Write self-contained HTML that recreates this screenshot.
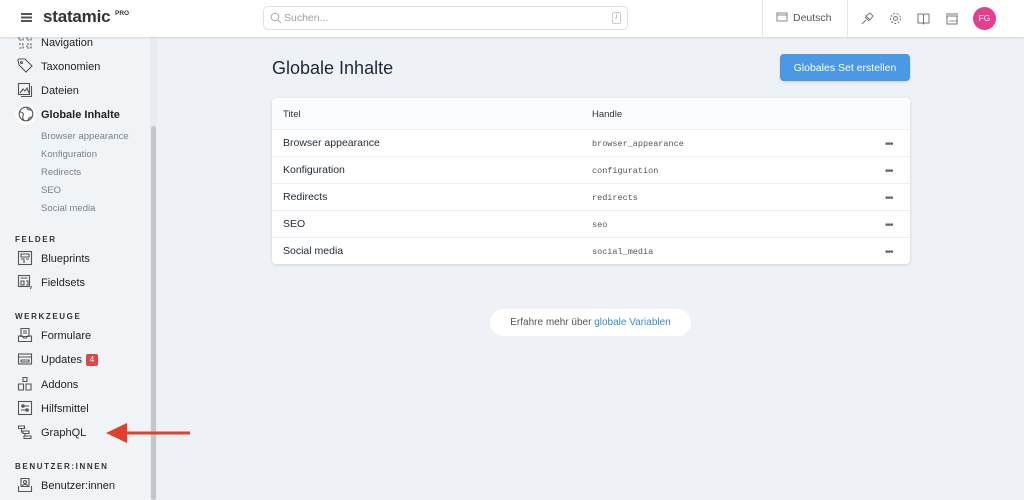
<!DOCTYPE html>
<html><head><meta charset="utf-8"><style>
*{box-sizing:border-box;margin:0;padding:0}
body{width:1024px;height:500px;overflow:hidden;background:#eef1f5;font-family:"Liberation Sans",sans-serif;color:#1f2937;position:relative}
.hdr{position:absolute;left:0;top:0;width:1024px;height:37px;background:#fff;box-shadow:0 1px 2px rgba(0,0,0,.12);z-index:5}
.side{position:absolute;left:0;top:37px;width:150px;height:463px;background:#f1f4f7}
.sb{position:absolute;left:150px;top:37px;width:7px;height:463px;background:#e8ecf0}
.sbt{position:absolute;left:151px;top:126px;width:5px;height:374px;background:#c4c7ca;border-radius:3px}
.it{position:absolute;left:41px;font-size:11px;color:#222;margin-top:1px}
.sub{position:absolute;left:41px;font-size:9.5px;color:#7a818a;margin-top:1px}
.sec{position:absolute;left:15px;font-size:8px;font-weight:bold;letter-spacing:1.6px;color:#333}
.ic{position:absolute;left:17px;width:16px;height:16px}
.ic svg{width:16px;height:16px;fill:none;stroke:#555;stroke-width:1.1}
.card{position:absolute;left:272px;top:98px;width:638px;height:166px;background:#fff;border-radius:4px;box-shadow:0 1px 3px rgba(0,0,0,.12)}
.row{position:absolute;left:0;width:638px;height:27px;border-top:1px solid #eceff2;font-size:10.5px}
.row .t{position:absolute;left:11px;top:7px}
.row .h{position:absolute;left:320px;top:9px;font-family:"Liberation Mono",monospace;font-size:8.5px;color:#555}
.row .d{position:absolute;left:613px;top:9px;font-size:10px;color:#666;letter-spacing:-1px}
</style></head><body>
<div class="hdr">
 <div style="position:absolute;left:21px;top:13px;width:11px;height:1.5px;background:#555;box-shadow:0 3.5px 0 #555,0 7px 0 #555"></div>
 <div style="position:absolute;left:43px;top:7px;font-size:17px;font-weight:bold;color:#333;letter-spacing:-.2px">statamic</div>
 <div style="position:absolute;left:115px;top:10px;font-size:6.5px;font-weight:bold;color:#333">PRO</div>
 <div style="position:absolute;left:263px;top:6px;width:365px;height:24px;border:1px solid #dde1e6;border-radius:5px;background:#fff">
  <svg style="position:absolute;left:6px;top:5px" width="12" height="12" viewBox="0 0 12 12"><circle cx="5" cy="5" r="3.8" fill="none" stroke="#aaa"/><path d="M8 8l3 3" stroke="#aaa"/></svg>
  <span style="position:absolute;left:20px;top:5px;font-size:10.5px;color:#9aa0a6">Suchen...</span>
  <span style="position:absolute;right:6px;top:5px;width:9px;height:12px;border:1px solid #ccc;border-radius:2px;font-size:7px;color:#888;text-align:center;line-height:10px">/</span>
 </div>
 <div style="position:absolute;left:762px;top:0;width:1px;height:37px;background:#e5e7eb"></div>
 <div style="position:absolute;left:847px;top:0;width:1px;height:37px;background:#e5e7eb"></div>
 <svg style="position:absolute;left:776px;top:12px" width="13" height="11" viewBox="0 0 13 11"><rect x="1" y="1" width="10" height="8" fill="none" stroke="#888"/><path d="M1 3h10" stroke="#888"/></svg>
 <span style="position:absolute;left:793px;top:12px;font-size:10.5px;color:#555">Deutsch</span>
 <svg style="position:absolute;left:861px;top:12px" width="13" height="13" viewBox="0 0 13 13" fill="none" stroke="#777"><path d="M1 12l4-4M4 5l4 4M5 4l4-3 3 3-3 4z"/></svg>
 <svg style="position:absolute;left:889px;top:12px" width="13" height="13" viewBox="0 0 13 13" fill="none" stroke="#777"><circle cx="6.5" cy="6.5" r="2"/><circle cx="6.5" cy="6.5" r="5" stroke-dasharray="2 1.5"/></svg>
 <svg style="position:absolute;left:917px;top:12px" width="13" height="13" viewBox="0 0 13 13" fill="none" stroke="#777"><path d="M1 2h4.5l1 1 1-1H12v9H7.5l-1 1-1-1H1zM6.5 3v8"/></svg>
 <svg style="position:absolute;left:945px;top:12px" width="14" height="13" viewBox="0 0 14 13" fill="none" stroke="#777"><path d="M1 2h12M1 4h12M2 4v8h10V4"/><text x="3" y="10" font-size="4" fill="#777" stroke="none">.com</text></svg>
 <div style="position:absolute;left:973px;top:7px;width:23px;height:23px;border-radius:50%;background:#e43f8e;color:#fff;font-size:8.5px;text-align:center;line-height:23px">FG</div>
</div>

<div class="side"></div>
<div class="sb"></div><div class="sbt"></div>

<div class="ic" style="top:34px"><svg viewBox="0 0 16 16"><path d="M2 2h4v4H2zM10 2h4v4h-4zM10 10h4v4h-4zM2 10h4v4H2" stroke-dasharray="2 1.2"/></svg></div>
<div class="it" style="top:36px">Navigation</div>
<div class="ic" style="top:58px"><svg viewBox="0 0 16 16"><path d="M1 2l1-1h6l7 7-6 6-7-7z"/><circle cx="4.5" cy="4.5" r="1"/></svg></div>
<div class="it" style="top:60px">Taxonomien</div>
<div class="ic" style="top:82px"><svg viewBox="0 0 16 16"><rect x="1.5" y="1.5" width="11" height="11"/><path d="M3 11l3-4 2 2 2-3 2 5M14.5 4v10.5H4"/></svg></div>
<div class="it" style="top:84px">Dateien</div>
<div style="position:absolute;left:15px;top:104px;width:21px;height:21px;border-radius:50%;background:#fff"></div>
<div class="ic" style="top:106px;left:17.5px"><svg viewBox="0 0 16 16"><circle cx="8" cy="8" r="6.8"/><path d="M2 6c3 0 4 2 3 4s1 4 1 5M9 1.5c0 2 2 3 4 2M10 15c0-3 2-4 4-4"/></svg></div>
<div class="it" style="top:108px;font-weight:bold">Globale Inhalte</div>
<div class="sub" style="top:130px">Browser appearance</div>
<div class="sub" style="top:148px">Konfiguration</div>
<div class="sub" style="top:166px">Redirects</div>
<div class="sub" style="top:184px">SEO</div>
<div class="sub" style="top:202px">Social media</div>
<div class="sec" style="top:235px">FELDER</div>
<div class="ic" style="top:250px"><svg viewBox="0 0 16 16"><rect x="1.5" y="1.5" width="13" height="13"/><path d="M4 4h8v3H4zM4 9h3v4M9 9h3"/></svg></div>
<div class="it" style="top:252px">Blueprints</div>
<div class="ic" style="top:274px"><svg viewBox="0 0 16 16"><rect x="1.5" y="1.5" width="11" height="11"/><path d="M3.5 4h7M4 7h3v4H4zM9 7h2v4H9M14.5 12l-1 3"/></svg></div>
<div class="it" style="top:276px">Fieldsets</div>
<div class="sec" style="top:312px">WERKZEUGE</div>
<div class="ic" style="top:327px"><svg viewBox="0 0 16 16"><path d="M4 1.5h8v8H4zM6 4h4M6 6h4M1.5 9v5.5h13V9h-4l-1 2h-3l-1-2z"/></svg></div>
<div class="it" style="top:329px">Formulare</div>
<div class="ic" style="top:351px"><svg viewBox="0 0 16 16"><rect x="1.5" y="3" width="13" height="10"/><path d="M1.5 6h13M4 9h8v2H4z"/></svg></div>
<div class="it" style="top:353px">Updates</div>
<div style="position:absolute;left:86px;top:354px;width:12px;height:12px;background:#e04848;border-radius:2px;color:#fff;font-size:8px;text-align:center;line-height:12px">4</div>
<div class="ic" style="top:376px"><svg viewBox="0 0 16 16"><path d="M6 1.5h4v4H6zM1.5 8h5v6h-5zM9 8h5v6H9z"/></svg></div>
<div class="it" style="top:378px">Addons</div>
<div class="ic" style="top:400px"><svg viewBox="0 0 16 16"><rect x="1.5" y="1.5" width="13" height="13"/><path d="M4 6h8M4 10h8"/><circle cx="6" cy="6" r="1.2"/><circle cx="10" cy="10" r="1.2"/></svg></div>
<div class="it" style="top:402px">Hilfsmittel</div>
<div class="ic" style="top:424px"><svg viewBox="0 0 16 16"><path d="M1.5 2h6v2.5h-6zM6 7h6v2.5H6zM7 12h7v2.5H7zM4.5 4.5V8H6M8 9.5v2.5"/></svg></div>
<div class="it" style="top:426px">GraphQL</div>
<svg style="position:absolute;left:104px;top:422px" width="88" height="22" viewBox="0 0 88 22"><path d="M18 11h68" stroke="#e0402c" stroke-width="3"/><path d="M2 11l21-10v20z" fill="#e0402c"/></svg>
<div class="sec" style="top:462px">BENUTZER:INNEN</div>
<div class="ic" style="top:477px"><svg viewBox="0 0 16 16"><path d="M4 1.5h8v8H4zM1.5 9v5.5h13V9"/><circle cx="8" cy="5" r="1.5"/><path d="M5.5 9c0-2 5-2 5 0"/></svg></div>
<div class="it" style="top:479px">Benutzer:innen</div>

<div style="position:absolute;left:272px;top:58px;font-size:18px;color:#1f2937">Globale Inhalte</div>
<div style="position:absolute;left:780px;top:54px;width:130px;height:27px;background:#4a98e6;border-radius:4px;box-shadow:0 1px 2px rgba(0,0,0,.15);color:#fff;font-size:10.5px;text-align:center;line-height:28px">Globales Set erstellen</div>

<div class="card">
 <div style="position:absolute;left:0;top:0;width:638px;height:31px;background:#fbfcfd;border-radius:4px 4px 0 0;font-size:9.5px;color:#333">
  <span style="position:absolute;left:11px;top:11px">Titel</span>
  <span style="position:absolute;left:320px;top:11px">Handle</span>
 </div>
 <div class="row" style="top:31px"><span class="t">Browser appearance</span><span class="h">browser_appearance</span><span class="d">•••</span></div>
 <div class="row" style="top:58px"><span class="t">Konfiguration</span><span class="h">configuration</span><span class="d">•••</span></div>
 <div class="row" style="top:85px"><span class="t">Redirects</span><span class="h">redirects</span><span class="d">•••</span></div>
 <div class="row" style="top:112px"><span class="t">SEO</span><span class="h">seo</span><span class="d">•••</span></div>
 <div class="row" style="top:139px"><span class="t">Social media</span><span class="h">social_media</span><span class="d">•••</span></div>
</div>

<div style="position:absolute;left:490px;top:309px;width:201px;height:27px;background:#fff;border-radius:14px;font-size:10px;color:#555;text-align:center;line-height:28px">Erfahre mehr über <span style="color:#3a8ad8">globale Variablen</span></div>
</body></html>
